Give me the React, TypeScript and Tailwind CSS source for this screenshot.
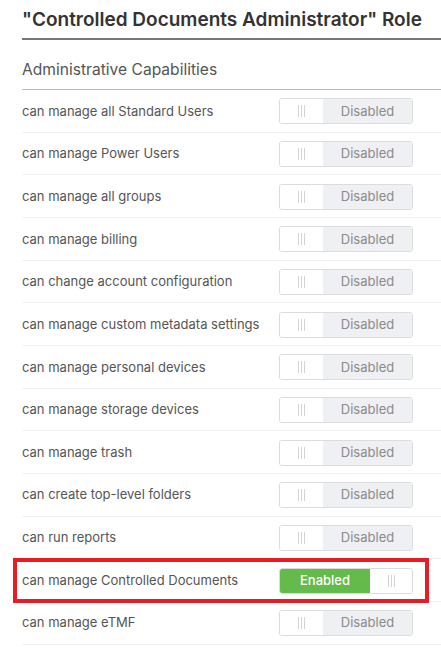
import React from 'react';

const capabilities = [
  { label: 'can manage all Standard Users', enabled: false },
  { label: 'can manage Power Users', enabled: false },
  { label: 'can manage all groups', enabled: false },
  { label: 'can manage billing', enabled: false },
  { label: 'can change account configuration', enabled: false },
  { label: 'can manage custom metadata settings', enabled: false },
  { label: 'can manage personal devices', enabled: false },
  { label: 'can manage storage devices', enabled: false },
  { label: 'can manage trash', enabled: false },
  { label: 'can create top-level folders', enabled: false },
  { label: 'can run reports', enabled: false },
  { label: 'can manage Controlled Documents', enabled: true, highlight: true },
  { label: 'can manage eTMF', enabled: false },
];

function Grip() {
  return (
    <div className="flex gap-[2px] h-[12px]">
      <span className="w-px h-full bg-[#d4d4d4]" />
      <span className="w-px h-full bg-[#d4d4d4]" />
      <span className="w-px h-full bg-[#d4d4d4]" />
    </div>
  );
}

function Toggle({ enabled }: { enabled: boolean }) {
  return (
    <div className="flex w-[134px] h-[26px] rounded-[3px] border border-[#dcdcdc] overflow-hidden text-[13px]">
      {enabled ? (
        <>
          <div className="flex-1 flex items-center justify-center bg-[#64bb4b] text-white font-medium">
            Enabled
          </div>
          <div className="w-[42px] flex items-center justify-center bg-white">
            <Grip />
          </div>
        </>
      ) : (
        <>
          <div className="w-[43px] flex items-center justify-center bg-white">
            <Grip />
          </div>
          <div className="flex-1 flex items-center justify-center bg-[#eef0f4] text-[#8a8a8a]">
            Disabled
          </div>
        </>
      )}
    </div>
  );
}

export default function App() {
  return (
    <main
      className="relative min-h-screen bg-white pl-[22px] overflow-hidden"
      style={{ fontFamily: 'Inter, "Noto Sans", sans-serif' }}
    >
      {/* Role title */}
      <div className="h-[40px] border-b-2 border-[#777] flex items-center -mr-4">
        <h1 className="text-[19px] font-semibold text-[#333] leading-none">
          "Controlled Documents Administrator" Role
        </h1>
      </div>

      {/* Section header */}
      <div className="h-[50px] border-b border-[#bbb] flex items-end pb-[11px] -mr-4">
        <h2 className="text-[15.6px] text-[#555] leading-none">Administrative Capabilities</h2>
      </div>

      {/* Capability rows */}
      <div className="-mr-4">
        {capabilities.map((cap) => (
          <div
            key={cap.label}
            className="relative h-[42.67px] border-b border-[#f0f0f0] flex items-center justify-between pr-[44px] pt-[1px]"
          >
            <span className="text-[13px] text-[#555]">{cap.label}</span>
            <Toggle enabled={cap.enabled} />
            {cap.highlight && (
              <div className="absolute left-[-9px] right-[28px] top-[-1px] bottom-[-2px] border-[4px] border-[#e81c24] pointer-events-none" />
            )}
          </div>
        ))}
      </div>
    </main>
  );
}
